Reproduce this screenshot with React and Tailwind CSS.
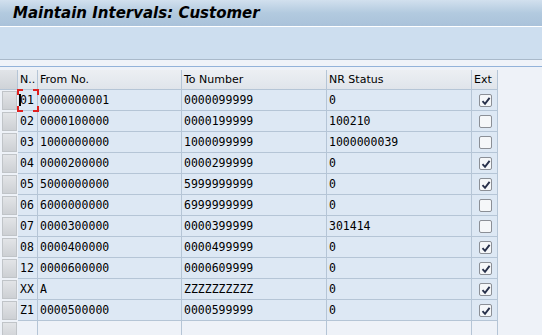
import React from 'react';

const rows = [
  { n: '01', from: '0000000001', to: '0000099999', nr: '0', ext: true },
  { n: '02', from: '0000100000', to: '0000199999', nr: '100210', ext: false },
  { n: '03', from: '1000000000', to: '1000099999', nr: '1000000039', ext: false },
  { n: '04', from: '0000200000', to: '0000299999', nr: '0', ext: true },
  { n: '05', from: '5000000000', to: '5999999999', nr: '0', ext: true },
  { n: '06', from: '6000000000', to: '6999999999', nr: '0', ext: false },
  { n: '07', from: '0000300000', to: '0000399999', nr: '301414', ext: false },
  { n: '08', from: '0000400000', to: '0000499999', nr: '0', ext: true },
  { n: '12', from: '0000600000', to: '0000609999', nr: '0', ext: true },
  { n: 'XX', from: 'A', to: 'ZZZZZZZZZZ', nr: '0', ext: true },
  { n: 'Z1', from: '0000500000', to: '0000599999', nr: '0', ext: true },
];

const cols = 'grid grid-cols-[18px_20px_144px_145px_145px_26px] w-[498px]';
const cell = 'box-border border-r border-b border-[#b5c5d6] flex items-center pl-[2px] pt-[1px] overflow-hidden whitespace-nowrap';

function CheckBox({ checked }) {
  return (
    <div className="w-[13px] h-[13px] box-border border border-[#8b8f96] rounded-[2px] bg-[#f5f7f9] flex items-center justify-center">
      {checked && (
        <svg width="10" height="10" viewBox="0 0 10 10">
          <path d="M1.5 5.2 L4 7.8 L8.6 1.8" fill="none" stroke="#27304a" strokeWidth="1.9" />
        </svg>
      )}
    </div>
  );
}

function Selector() {
  return (
    <div className="box-border border-b border-[#eef2f8] bg-[#eef2f8] pl-[2px] pr-[1px] pt-[1px]">
      <div className="h-full bg-gradient-to-b from-[#e2e4e7] to-[#cdd0d4] border border-[#c0c4c8] box-border" />
    </div>
  );
}

export default function App() {
  return (
    <div className="w-[542px] h-[335px] overflow-hidden bg-[#eef2f8] text-black" style={{ fontFamily: '"DejaVu Sans", sans-serif' }}>
      {/* title */}
      <div className="h-[26px] bg-gradient-to-b from-[#d2e0ee] via-[#b2cadf] to-[#aac2da] flex items-center pl-[13px]">
        <h1 className="text-[15px] font-bold italic leading-none">Maintain Intervals: Customer</h1>
      </div>
      <div className="h-px bg-white" />
      {/* toolbar */}
      <div className="h-[32px] bg-[#cddeef]" />
      <div className="h-px bg-[#a9b9ca]" />
      <div className="h-[6px] bg-[#eff3f9]" />
      <div className="h-px bg-[#93b3da]" />
      <div className="h-[3px] bg-[#eef2f8]" />

      {/* table */}
      <div className="relative text-[11px]">
        <div className={`${cols} h-[20px] bg-gradient-to-b from-[#eceff3] to-[#dfe4ea]`}>
          <div className="box-border border-r border-b border-[#b5c5d6] bg-gradient-to-b from-[#e1e4e8] to-[#cfd3d8]" />
          <div className={cell}>N..</div>
          <div className={cell}>From No.</div>
          <div className={cell}>To Number</div>
          <div className={cell}>NR Status</div>
          <div className={cell}>Ext</div>
        </div>
        {rows.map((r) => (
          <div key={r.n} className={`${cols} h-[21px] bg-[#dde8f4] text-[11.5px]`} style={{ fontFamily: '"DejaVu Sans Mono", monospace' }}>
            <Selector />
            <div className={cell}>{r.n}</div>
            <div className={cell}>{r.from}</div>
            <div className={cell}>{r.to}</div>
            <div className={cell}>{r.nr}</div>
            <div className={`${cell} justify-center pl-0 pt-0`}>
              <CheckBox checked={r.ext} />
            </div>
          </div>
        ))}
        <div className={`${cols} h-[21px] bg-[#eef2f8]`}>
          <Selector />
          <div className={cell} />
          <div className={cell} />
          <div className={cell} />
          <div className={cell} />
          <div className={cell} />
        </div>

        {/* focus cursor on first cell */}
        <div className="absolute left-[17px] top-[19px] w-[22px] h-[23px] pointer-events-none">
          <div className="absolute left-0 top-0 w-[6px] h-[6px] border-l-2 border-t-2 border-[#e02020]" />
          <div className="absolute right-0 top-0 w-[6px] h-[6px] border-r-2 border-t-2 border-[#e02020]" />
          <div className="absolute left-0 bottom-0 w-[6px] h-[6px] border-l-2 border-b-2 border-[#e02020]" />
          <div className="absolute right-0 bottom-0 w-[6px] h-[6px] border-r-2 border-b-2 border-[#e02020]" />
          <div className="absolute left-[2px] top-[5px] w-[2px] h-[12px] bg-black" />
        </div>
      </div>
    </div>
  );
}
